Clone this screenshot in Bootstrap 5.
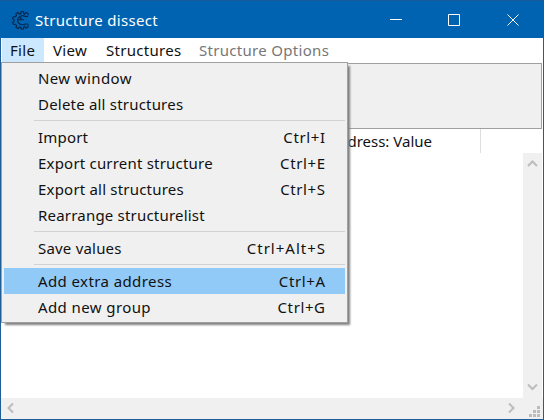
<!DOCTYPE html>
<html lang="en">
<head>
<meta charset="utf-8">
<title>Structure dissect</title>
<link href="https://cdn.jsdelivr.net/npm/bootstrap@5.3.0/dist/css/bootstrap.min.css" rel="stylesheet">
<style>
body { font: 400 15px/26px "Noto Sans", sans-serif; color: #111; width: 544px; height: 420px; overflow: hidden; }
.app-window { width: 544px; height: 420px; border: 1px solid #1e5f99; border-top: 0; background: #fff; }
.title-bar { height: 38px; margin: 0 -1px; background: #0063b1; color: #fff; padding-left: 11px; border-top: 1px solid #1a5a96; }
.title-bar svg { display: block; flex: none; }
.app-icon { margin-right: 4px; }
.menu-bar { height: 25px; line-height: 25px; padding-left: 1px; letter-spacing: .3px; }
.menu-bar span { height: 24px; white-space: nowrap; }
.file-tab { width: 42px; background: #cce8ff; padding-left: 8px; }
.view-tab { width: 52px; padding-left: 9px; }
.struct-tab { width: 93px; padding-left: 10px; }
.opt-tab { color: #777; padding-left: 10px; }
.tool-panel { height: 66px; background: #f0f0f0; border: 1px solid #a0a0a0; border-left: 0; margin-right: 1px; }
.head-row { height: 24px; line-height: 25px; }
.head-cell { width: 480px; border-right: 1px solid #dedede; padding-right: 48px; }
.track { background: #f0f0f0; }
.v-track { width: 19px; margin-right: 1px; }
.h-track { height: 21px; padding: 0 0 0 4px; }
.file-menu { left: 0; top: 62px; width: 347px; height: 261px; padding: 2px; background: #f0f0f0; border: 1px solid #a0a0a0; box-shadow: 3px 3px 2px -1px #808080; }
.menu-line { height: 26px; padding: 0 20px 0 34px; white-space: nowrap; letter-spacing: .2px; }
.menu-line.hot { background: #91c9f7; }
.menu-sep { height: 7px; padding: 3px 0 3px 30px; }
.menu-sep i { display: block; height: 1px; background: #d2d2d2; }
.wide { letter-spacing: .4px; }
.keys { letter-spacing: .6px; margin-right: -.6px; }
.keys-long { letter-spacing: 1px; margin-right: -1px; }
.caption-text { letter-spacing: .3px; }
</style>
<script src="https://cdn.jsdelivr.net/npm/bootstrap@5.3.0/dist/js/bootstrap.bundle.min.js"></script>
</head>
<body class="m-0">
<div class="app-window d-flex flex-column position-relative">
  <div class="title-bar d-flex align-items-center flex-shrink-0">
    <svg class="app-icon" width="20" height="20" viewBox="0 0 20 20" fill="none" stroke="#06264a">
      <path d="M17 5.600V3.500l-2-1-1.500 1.500-1-.5V1.500h-2.500V3.500l-1.500.5L7 2.500 5 3.500l.5 2L4.300 6.700 2.500 6.500 1.500 8.500 3 9.500v2l-1.500 1 1 2 2-.2 1 1.200-.5 2 2 1 1.500-1.500 1.500.5v1.500h2.500v-2l1-.5L15 18l2-1v-2.500" stroke-width="1.100"/>
      <path d="M17 6.500h-2.500C11 4.500 7 6.500 6.500 10c0 4 4.500 5.800 8 4H17M6 9.800h7M8.500 7l2 2" stroke-width="1.100"/>
    </svg>
    <span class="me-auto caption-text">Structure dissect</span>
    <svg width="176" height="36" viewBox="0 0 176 36" fill="none" stroke="#fff">
      <path d="M22 17.500h12M80.500 12.500h11v11h-11zM139.500 12.500l11 11M150.500 12.500l-11 11"/>
    </svg>
  </div>
  <div class="menu-bar d-flex flex-shrink-0">
    <span class="file-tab">File</span><span class="view-tab">View</span><span class="struct-tab">Structures</span><span class="opt-tab">Structure Options</span>
  </div>
  <div class="tool-panel flex-shrink-0"></div>
  <div class="head-row flex-shrink-0"><div class="head-cell text-end h-100">Address: Value</div></div>
  <div class="d-flex flex-grow-1">
    <div class="flex-grow-1"></div>
    <div class="track v-track d-flex flex-column justify-content-between">
      <svg width="19" height="20" fill="none" stroke="#bcbcbc" stroke-width="2"><path d="M5 13l4.500-4.500 4.500 4.500"/></svg>
      <svg width="19" height="20" fill="none" stroke="#bcbcbc" stroke-width="2"><path d="M5 6.500l4.500 4.500 4.500-4.500"/></svg>
    </div>
  </div>
  <div class="track h-track d-flex justify-content-between flex-shrink-0">
    <svg width="12" height="20" fill="none" stroke="#bcbcbc" stroke-width="2"><path d="M8 5.500l-4.500 4.500 4.500 4.500"/></svg>
    <svg width="40" height="20"><path d="M6 5.500l4.500 4.500-4.500 4.500" fill="none" stroke="#bcbcbc" stroke-width="2"/><path d="M34 8h3v3h-3zM30 12h3v3h-3zM34 12h3v3h-3zM26 16h3v3h-3zM30 16h3v3h-3zM34 16h3v3h-3z" fill="#bcbcbc"/></svg>
  </div>
  <div class="file-menu position-absolute">
    <div class="menu-line wide">New window</div>
    <div class="menu-line">Delete all structures</div>
    <div class="menu-sep"><i></i></div>
    <div class="menu-line d-flex justify-content-between"><span>Import</span><span class="keys">Ctrl+I</span></div>
    <div class="menu-line d-flex justify-content-between"><span>Export current structure</span><span class="keys">Ctrl+E</span></div>
    <div class="menu-line d-flex justify-content-between"><span>Export all structures</span><span class="keys">Ctrl+S</span></div>
    <div class="menu-line">Rearrange structurelist</div>
    <div class="menu-sep"><i></i></div>
    <div class="menu-line d-flex justify-content-between"><span>Save values</span><span class="keys-long">Ctrl+Alt+S</span></div>
    <div class="menu-sep"><i></i></div>
    <div class="menu-line hot d-flex justify-content-between"><span class="wide">Add extra address</span><span class="keys">Ctrl+A</span></div>
    <div class="menu-line d-flex justify-content-between"><span class="wide">Add new group</span><span class="keys">Ctrl+G</span></div>
  </div>
</div>
</body>
</html>
